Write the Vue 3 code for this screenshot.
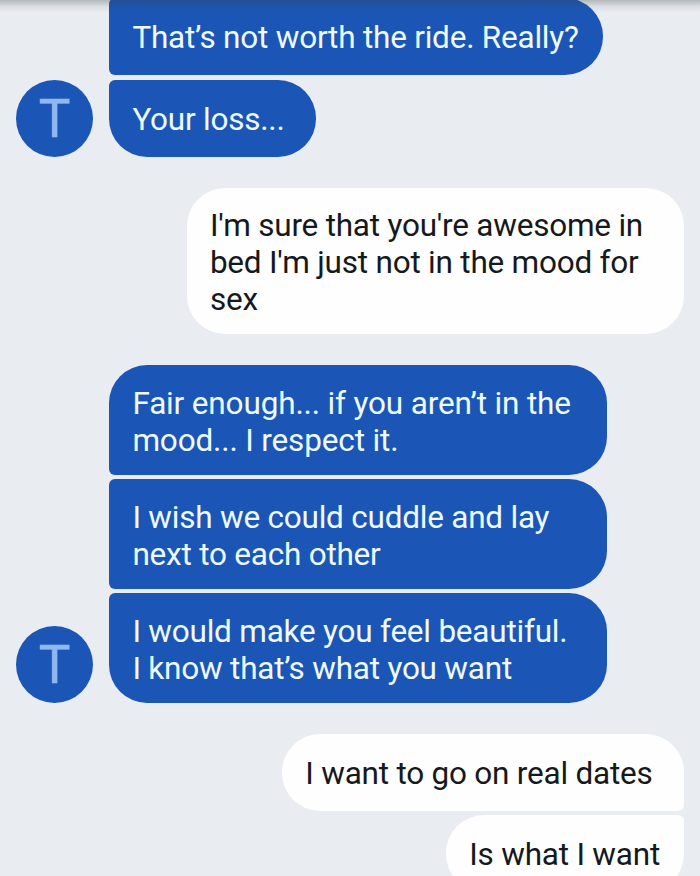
<template>
  <div class="chat">
    <div class="top-shadow"></div>
    <div class="thread">
      <div v-for="(group, g) in groups" :key="g" class="group" :class="group.from">
        <div v-if="group.from === 'them'" class="avatar"><span>T</span></div>
        <div class="bubbles">
          <div
            v-for="(message, m) in group.messages"
            :key="m"
            class="bubble"
            :class="{
              joined: m > 0 || group.continued,
              open: m < group.messages.length - 1,
              wide: message.lines.length > 1,
              roomy: message.roomy,
              loose: message.loose
            }"
          >
            <span v-for="(line, l) in message.lines" :key="l" class="line">{{ line }}</span>
          </div>
        </div>
      </div>
    </div>
  </div>
</template>

<script setup>
import { ref } from 'vue';

const groups = ref([
  {
    from: 'them',
    continued: true,
    messages: [
      { lines: ['That’s not worth the ride. Really?'] },
      { lines: ['Your loss...'], roomy: true }
    ]
  },
  {
    from: 'me',
    messages: [
      { lines: ["I'm sure that you're awesome in", "bed I'm just not in the mood for", 'sex'] }
    ]
  },
  {
    from: 'them',
    messages: [
      { lines: ['Fair enough... if you aren’t in the', 'mood... I respect it.'], loose: true },
      { lines: ['I wish we could cuddle and lay', 'next to each other'] },
      { lines: ['I would make you feel beautiful.', 'I know that’s what you want'] }
    ]
  },
  {
    from: 'me',
    messages: [
      { lines: ['I want to go on real dates'], roomy: true },
      { lines: ['Is what I want'] }
    ]
  }
]);
</script>

<style>
body {
  background: #e9ecf1;
  overflow: hidden;
}
</style>

<style scoped>
.chat {
  position: relative;
  height: 876px;
  overflow: hidden;
  background: #e9ecf1;
  font-family: Roboto, "Liberation Sans", sans-serif;
  font-size: 31.5px;
  line-height: 37px;
  letter-spacing: -0.22px;
}

.top-shadow {
  position: absolute;
  top: 0;
  left: 0;
  right: 0;
  height: 13px;
  z-index: 1;
  background: linear-gradient(rgba(50, 65, 60, 0.3), rgba(50, 65, 60, 0.08) 50%, rgba(50, 65, 60, 0));
}

.thread {
  display: flex;
  flex-direction: column;
  gap: 31px;
  margin-top: -2px;
  padding: 0 16px;
}

.group {
  display: flex;
  align-items: flex-end;
  gap: 16px;
}

.me {
  justify-content: flex-end;
}

.avatar {
  box-sizing: border-box;
  display: flex;
  align-items: center;
  justify-content: center;
  width: 77px;
  height: 77px;
  padding-top: 2px;
  border-radius: 50%;
  background: #1b56b7;
  color: #8fb7f0;
  font-size: 53px;
  letter-spacing: 0;
  -webkit-text-stroke: 0.5px #8fb7f0;
}

.bubbles {
  display: flex;
  flex-direction: column;
  align-items: flex-start;
  gap: 4.5px;
}

.me .bubbles {
  align-items: flex-end;
}

.bubble {
  box-sizing: border-box;
  display: flex;
  flex-direction: column;
  justify-content: center;
  min-height: 77px;
  padding: 19.05px 24px 16.45px 23.4px;
  border-radius: 38px;
  background: #1b56b7;
  color: #effaff;
  white-space: nowrap;
}

.wide {
  width: 497.5px;
  padding-top: 19.75px;
  padding-bottom: 15.75px;
}

.roomy {
  padding-right: 31.5px;
}

.loose {
  letter-spacing: -0.15px;
}

.me .bubble {
  background: #fefefe;
  color: #15191d;
}

.them .joined {
  border-top-left-radius: 6px;
}

.them .open {
  border-bottom-left-radius: 6px;
}

.me .joined {
  border-top-right-radius: 6px;
}

.me .open {
  border-bottom-right-radius: 6px;
}
</style>
